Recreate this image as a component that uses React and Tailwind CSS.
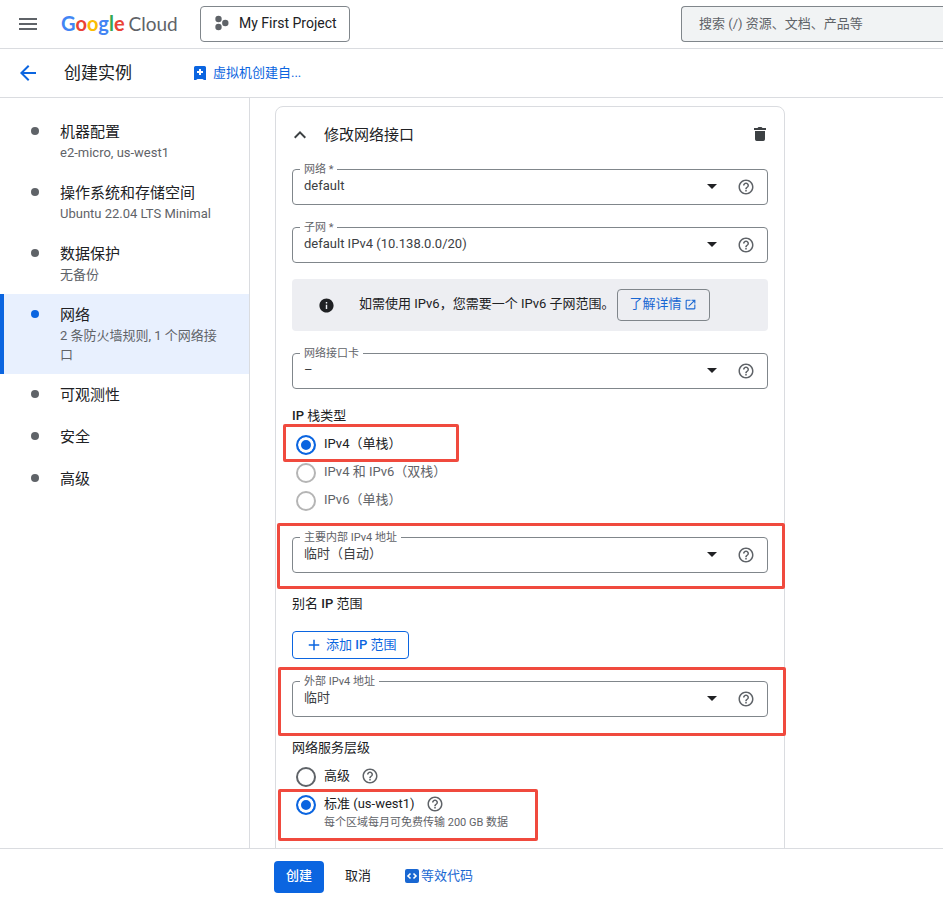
import React from "react";
import { useState } from 'react';
import { MdMenu, MdArrowBack, MdExpandLess, MdHelpOutline, MdInfo, MdAdd, MdOpenInNew } from 'react-icons/md';

const steps = [
  { id: 'machine', name: '机器配置', desc: 'e2-micro, us-west1' },
  { id: 'os', name: '操作系统和存储空间', desc: 'Ubuntu 22.04 LTS Minimal' },
  { id: 'backup', name: '数据保护', desc: '无备份' },
  { id: 'network', name: '网络', desc: '2 条防火墙规则, 1 个网络接口' },
  { id: 'observability', name: '可观测性' },
  { id: 'security', name: '安全' },
  { id: 'advanced', name: '高级' }
];

function ProjectIcon() {
  return (
    <svg width="14" height="16" viewBox="0 0 14 16" fill="#5f6368" aria-hidden="true">
      <circle cx="3.500" cy="4" r="3.200" />
      <circle cx="3.500" cy="12" r="3.200" />
      <circle cx="10.300" cy="8" r="3.200" />
    </svg>
  );
}

function BookmarkIcon() {
  return (
    <svg width="12" height="14" viewBox="0 0 12 14" aria-hidden="true">
      <path d="M1.500 0h9A1.500 1.500 0 0 1 12 1.500V14H10L8.500 13h-5L2 14H0V1.500A1.500 1.500 0 0 1 1.500 0z" fill="#0b65e0" />
      <path d="M6 3v6M3 6h6" stroke="#fff" strokeWidth="2" />
    </svg>
  );
}

function TrashIcon() {
  return (
    <svg width="12" height="14" viewBox="0 0 12 14" fill="#3c4043" aria-hidden="true">
      <path d="M0 1h3.500l1-1h3l1 1H12v2H0z" />
      <path d="M1 4h10v8.300A1.700 1.700 0 0 1 9.300 14H2.700A1.700 1.700 0 0 1 1 12.300z" />
    </svg>
  );
}

function CodeIcon() {
  return (
    <svg width="14" height="14" viewBox="0 0 14 14" fill="none" aria-hidden="true">
      <rect width="14" height="14" rx="2" fill="#1967d2" />
      <path d="M5.500 4.500L3 7l2.500 2.500M8.500 4.500L11 7l-2.500 2.500" stroke="#fff" strokeWidth="1.600" />
    </svg>
  );
}

function HelpButton() {
  return (
    <button type="button" aria-label="帮助" className="shrink-0 text-[#5f6368]">
      <MdHelpOutline size={18} />
    </button>
  );
}

// Red frame drawn over the settings that matter
function Highlight({ className }) {
  return <span className={`absolute border-3 border-[#f04a3e] rounded-xs pointer-events-none ${className}`} />;
}

function SelectField({ id, label, value, children }) {
  return (
    <div className="relative flex items-center h-9 pr-3 border border-[#80868b] rounded">
      <label htmlFor={id} className="absolute -top-2 left-[7px] px-1 bg-white text-[11px] leading-4 text-[#5f6368]">
        {label}
      </label>
      <div className="relative flex-1">
        <select id={id} className="block appearance-none w-full pl-[11px] pb-0.5 text-[13px] leading-5 text-[#3c4043] bg-transparent outline-none">
          <option>{value}</option>
        </select>
        <svg className="absolute right-5 top-2 pointer-events-none" width="10" height="5" viewBox="0 0 10 5" fill="#202124" aria-hidden="true">
          <path d="M0 0h10L5 5z" />
        </svg>
      </div>
      <HelpButton />
      {children}
    </div>
  );
}

function RadioRow({ name, value, label, checked, onChange, disabled, help, children }) {
  const id = `${name}-${value}`;
  return (
    <div className="relative flex items-center h-7 pl-1">
      <input
        id={id}
        type="radio"
        name={name}
        checked={checked}
        onChange={() => onChange(value)}
        disabled={disabled}
        className="appearance-none shrink-0 size-5 rounded-full border-2 border-[#5f6368] disabled:border-[#b5b5b5] checked:border-[#0b65e0] checked:bg-[#0b65e0] checked:shadow-[inset_0_0_0_3px_white]"
      />
      <label htmlFor={id} className={`pl-2 pb-[3px] text-[13px] leading-5 ${disabled ? 'text-[#5f6368]' : 'text-[#202124]'}`}>
        {label}
      </label>
      {help && <div className="flex pl-[11px] pb-0.5"><HelpButton /></div>}
      {children}
    </div>
  );
}

export default function App() {
  const [activeStep, setActiveStep] = useState('network');
  const [stack, setStack] = useState('ipv4');
  const [tier, setTier] = useState('standard');

  return (
    <div className="flex flex-col h-screen bg-white text-[#202124] text-[13px] leading-5 font-[Roboto,'Noto_Sans_CJK_SC',sans-serif]">
      <header className="flex items-center shrink-0 h-[49px] pl-4 border-b border-[#dadce0]">
        <button type="button" aria-label="菜单" className="text-[#5f6368]">
          <MdMenu size={24} />
        </button>
        <a href="#" className="flex items-baseline w-[139px] pl-[21px] pb-0.5 text-[20px] leading-6 whitespace-nowrap font-[Lato,sans-serif]" aria-label="Google Cloud">
          <span className="font-bold">
            <span className="text-[#4285f4]">G</span>
            <span className="text-[#ea4335]">o</span>
            <span className="text-[#fbbc04]">o</span>
            <span className="text-[#4285f4]">g</span>
            <span className="text-[#34a853]">l</span>
            <span className="text-[#ea4335]">e</span>
          </span>
          <span className="pl-1 text-[19px] text-[#5f6368]">Cloud</span>
        </a>
        <button type="button" className="flex items-center gap-2.5 h-9 ml-[21px] pl-3.5 pr-3 pb-0.5 border border-[#80868b] rounded text-[14px] whitespace-nowrap">
          <ProjectIcon />
          My First Project
        </button>
        <input
          type="search"
          aria-label="搜索"
          placeholder="搜索 (/) 资源、文档、产品等"
          className="w-[262px] h-9 ml-auto pl-[17px] pb-0.5 bg-[#f1f3f4] border border-r-0 border-[#80868b] rounded-l text-[13px] placeholder:text-[#5f6368] outline-none"
        />
      </header>

      <div className="flex items-center shrink-0 h-[49px] pl-4 border-b border-[#dadce0]">
        <button type="button" aria-label="返回" className="text-[#0b65e0]">
          <MdArrowBack size={24} />
        </button>
        <h1 className="pl-6 text-[17px] leading-6">创建实例</h1>
        <a href="#" className="flex items-center gap-[7px] pl-[62px] text-[#0b65e0]">
          <BookmarkIcon />
          虚拟机创建自...
        </a>
      </div>

      <div className="flex flex-1 min-h-0">
        <nav className="shrink-0 w-[250px] pt-[13px] border-r border-[#dadce0]">
          {steps.map(step => {
            const active = step.id === activeStep;
            return (
              <button
                key={step.id}
                type="button"
                onClick={() => setActiveStep(step.id)}
                className={`flex w-full py-2.5 pr-5 border-l-4 text-left ${
                  active ? 'bg-[#e8f0fe] border-[#0b65e0]' : 'border-transparent'
                }`}
              >
                <span className={`shrink-0 size-2 mt-1.5 ml-[27px] mr-[21px] rounded-full ${active ? 'bg-[#0b65e0]' : 'bg-[#5f6368]'}`} />
                <span>
                  <span className="block text-[15px] leading-[22px]">{step.name}</span>
                  {step.desc && <span className="block leading-[19px] text-[#5f6368]">{step.desc}</span>}
                </span>
              </button>
            );
          })}
        </nav>

        <main className="flex-1 min-w-0 overflow-hidden pt-2 pl-[25px]">
          <section className="max-w-[510px] px-4 pb-8 border border-[#dadce0] rounded-lg">
            <div className="flex items-center h-14 mb-1.5">
              <button type="button" aria-label="收起" className="-ml-1 text-[#3c4043]">
                <MdExpandLess size={24} />
              </button>
              <h2 className="flex-1 pl-3 text-[15px]">修改网络接口</h2>
              <button type="button" aria-label="删除" className="mr-0.5 pb-0.5">
                <TrashIcon />
              </button>
            </div>

            <div className="flex flex-col gap-[22px]">
              <SelectField id="network" label="网络 *" value="default" />
              <SelectField id="subnet" label="子网 *" value="default IPv4 (10.138.0.0/20)" />
            </div>

            <div className="flex items-center h-13 mt-4 mb-[22px] pl-[26px] bg-[#edeef2] rounded">
              <MdInfo size={17} className="shrink-0" />
              <p className="pl-6 pr-0.5 pb-0.5 whitespace-nowrap">如需使用 IPv6，您需要一个 IPv6 子网范围。</p>
              <a href="#" className="flex items-center gap-0.5 h-8 px-3 pb-0.5 border border-[#80868b] rounded text-[#1967d2] whitespace-nowrap">
                了解详情
                <MdOpenInNew size={13} />
              </a>
            </div>

            <SelectField id="nic" label="网络接口卡" value="–" />

            <h3 className="mt-[17px] mb-[5px]"><span className="font-medium">IP</span> 栈类型</h3>
            <RadioRow name="stack" value="ipv4" label="IPv4（单栈）" checked={stack === 'ipv4'} onChange={setStack}>
              <Highlight className="-left-[9px] -top-[7px] w-44 h-[38px]" />
            </RadioRow>
            <RadioRow name="stack" value="dual" label="IPv4 和 IPv6（双栈）" checked={stack === 'dual'} onChange={setStack} disabled />
            <RadioRow name="stack" value="ipv6" label="IPv6（单栈）" checked={stack === 'ipv6'} onChange={setStack} disabled />

            <div className="mt-[22px]">
              <SelectField id="internal-ip" label="主要内部 IPv4 地址" value="临时（自动）">
                <Highlight className="-left-4 -right-[18px] -top-[15px] -bottom-[17px]" />
              </SelectField>
            </div>

            <h3 className="mt-[21px] mb-[17px]">别名 <span className="font-medium">IP</span> 范围</h3>
            <button type="button" className="flex items-center gap-[3px] h-7 mb-[22px] px-3 border border-[#0b65e0] rounded text-[#0b65e0]">
              <MdAdd size={18} />
              <span>添加 <span className="font-medium">IP</span> 范围</span>
            </button>

            <SelectField id="external-ip" label="外部 IPv4 地址" value="临时">
              <Highlight className="-left-[15px] -right-[19px] -top-[15px] -bottom-5" />
            </SelectField>

            <h3 className="mt-[21px] mb-[5px]">网络服务层级</h3>
            <RadioRow name="tier" value="premium" label="高级" checked={tier === 'premium'} onChange={setTier} help />
            <RadioRow name="tier" value="standard" label="标准 (us-west1)" checked={tier === 'standard'} onChange={setTier} help>
              <Highlight className="-left-3.5 -top-0.5 w-65 h-13" />
            </RadioRow>
            <p className="-mt-1 pl-8 text-[11px] leading-4 text-[#5f6368]">每个区域每月可免费传输 200 GB 数据</p>
          </section>
        </main>
      </div>

      <footer className="flex items-start shrink-0 h-13 pt-3 pl-[274px] border-t border-[#dadce0]">
        <button type="button" className="h-8 px-3 pb-0.5 bg-[#0b65e0] rounded text-white font-medium">创建</button>
        <button type="button" className="h-8 ml-[9px] px-3 pb-0.5">取消</button>
        <a href="#" className="flex items-center gap-0.5 h-8 ml-[22px] pb-0.5 text-[#1967d2]">
          <CodeIcon />
          等效代码
        </a>
      </footer>
    </div>
  );
}
